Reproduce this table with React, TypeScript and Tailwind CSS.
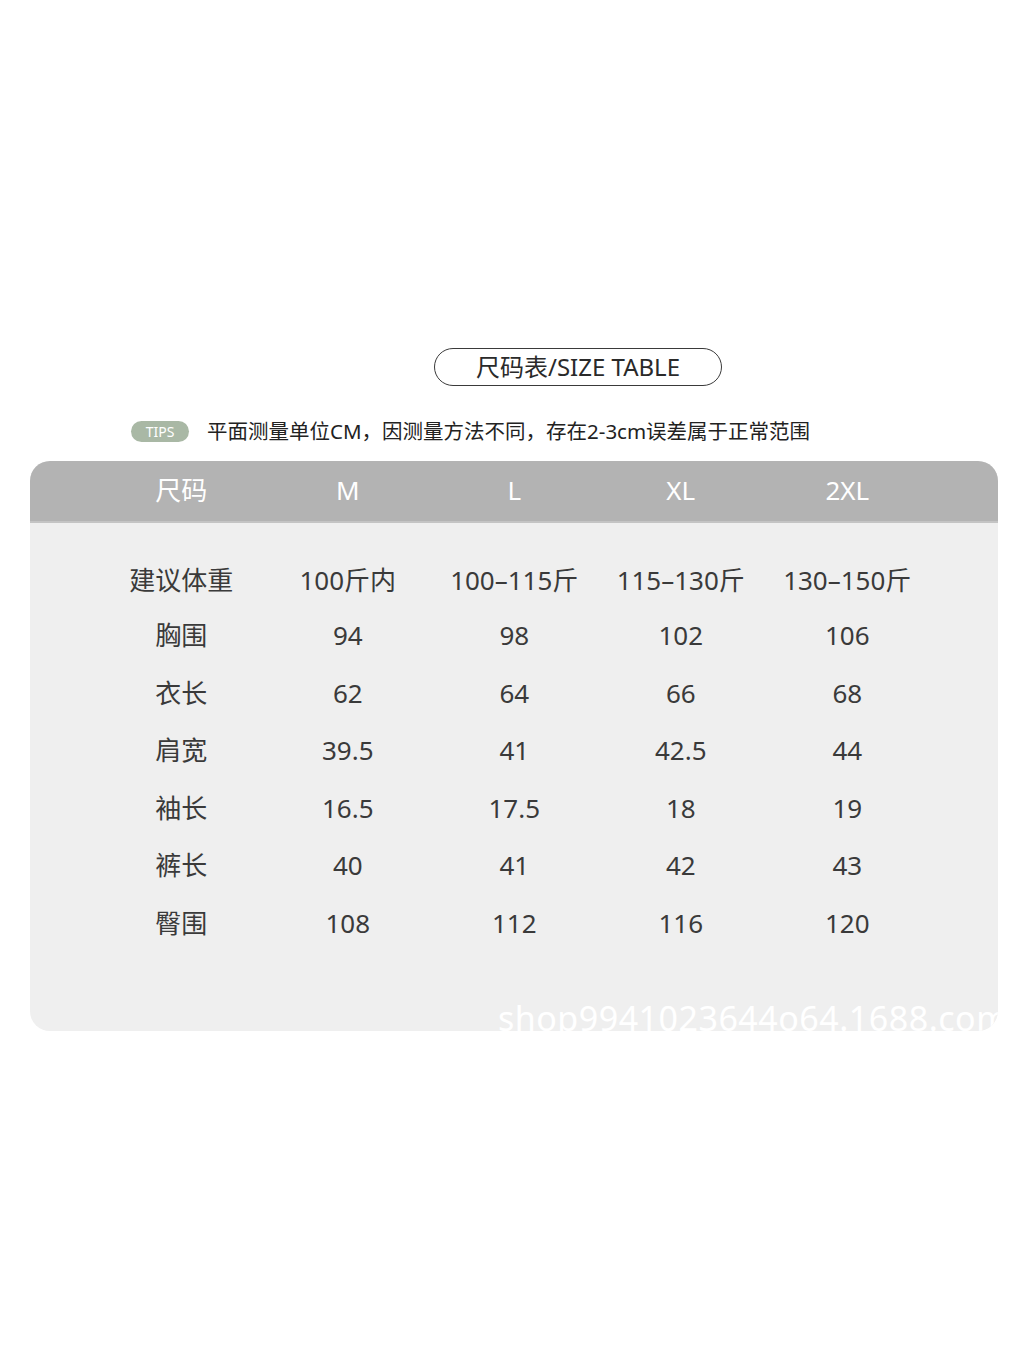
const cols = ["尺码", "M", "L", "XL", "2XL"];

const rows = [
  ["建议体重", "100斤内", "100–115斤", "115–130斤", "130–150斤"],
  ["胸围", "94", "98", "102", "106"],
  ["衣长", "62", "64", "66", "68"],
  ["肩宽", "39.5", "41", "42.5", "44"],
  ["袖长", "16.5", "17.5", "18", "19"],
  ["裤长", "40", "41", "42", "43"],
  ["臀围", "108", "112", "116", "120"],
];

const font = { fontFamily: '"Noto Sans", "Noto Sans CJK SC", sans-serif' };

export default function App() {
  return (
    <div className="w-[1024px] h-[1365px] bg-white" style={font}>
      <div className="pt-[348px]">
        {/* Title */}
        <div className="flex justify-center pl-[132px]">
          <div className="w-[288px] h-[38px] rounded-full border-[1.5px] border-[#3a3a3a] flex items-center justify-center text-[24px] text-[#2a2a2a]">
            尺码表/SIZE TABLE
          </div>
        </div>

        {/* Tips */}
        <div className="flex items-center mt-[30px] pl-[131px]">
          <span className="w-[58px] h-[21px] rounded-full bg-[#a9b8a5] text-white text-[14px] flex items-center justify-center">
            TIPS
          </span>
          <span className="ml-[18px] text-[20.5px] text-[#222]">
            平面测量单位CM，因测量方法不同，存在2-3cm误差属于正常范围
          </span>
        </div>

        {/* Table */}
        <div className="relative mt-[14px] ml-[30px] w-[968px] h-[570px] rounded-[20px] bg-[#efefef] overflow-hidden">
          <div className="h-[62px] bg-[#b3b3b3] border-b-2 border-[#c4c4c4] pl-[68px] grid grid-cols-[repeat(5,166.5px)] items-center">
            {cols.map((c) => (
              <div key={c} className="text-center text-white text-[26px]">
                {c}
              </div>
            ))}
          </div>
          <div className="pt-[32px] pl-[68px]">
            {rows.map((r, i) => (
              <div
                key={i}
                className={`grid grid-cols-[repeat(5,166.5px)] items-center ${i === 0 ? "h-[52px]" : "h-[57.6px]"}`}
              >
                {r.map((v, j) => (
                  <div key={j} className="text-center text-[26px] text-[#3a3a3a] whitespace-nowrap">
                    {v}
                  </div>
                ))}
              </div>
            ))}
          </div>
          <div className="absolute left-[468px] top-[540px] text-[34px] text-white whitespace-nowrap leading-none tracking-[0.5px]">
            shop9941023644o64.1688.com
          </div>
        </div>
      </div>
    </div>
  );
}
